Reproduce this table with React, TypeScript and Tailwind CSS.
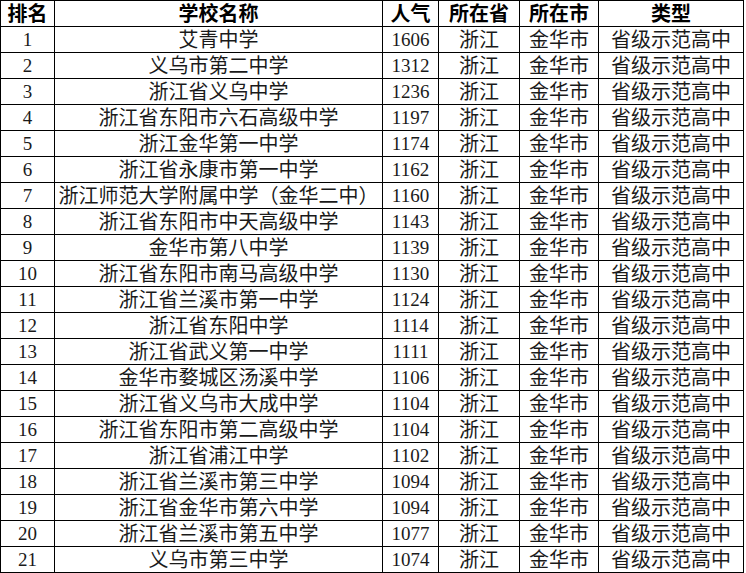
const rows: [number, string, number][] = [
  [1, "艾青中学", 1606],
  [2, "义乌市第二中学", 1312],
  [3, "浙江省义乌中学", 1236],
  [4, "浙江省东阳市六石高级中学", 1197],
  [5, "浙江金华第一中学", 1174],
  [6, "浙江省永康市第一中学", 1162],
  [7, "浙江师范大学附属中学（金华二中）", 1160],
  [8, "浙江省东阳市中天高级中学", 1143],
  [9, "金华市第八中学", 1139],
  [10, "浙江省东阳市南马高级中学", 1130],
  [11, "浙江省兰溪市第一中学", 1124],
  [12, "浙江省东阳中学", 1114],
  [13, "浙江省武义第一中学", 1111],
  [14, "金华市婺城区汤溪中学", 1106],
  [15, "浙江省义乌市大成中学", 1104],
  [16, "浙江省东阳市第二高级中学", 1104],
  [17, "浙江省浦江中学", 1102],
  [18, "浙江省兰溪市第三中学", 1094],
  [19, "浙江省金华市第六中学", 1094],
  [20, "浙江省兰溪市第五中学", 1077],
  [21, "义乌市第三中学", 1074],
];

const headers = ["排名", "学校名称", "人气", "所在省", "所在市", "类型"];

const cell =
  "h-[26px] border-r border-b border-black flex items-center justify-center whitespace-nowrap leading-none";
const zh = `${cell} text-[20px]`;

export default function App() {
  return (
    <div className="bg-white min-h-screen">
      <div
        className="grid grid-cols-[54px_328px_56px_81px_79px_145px] w-[744px] border-l border-t border-black text-[19px] text-[#1a1a1a]"
        style={{ fontFamily: '"Liberation Serif", "Noto Sans CJK SC", serif' }}
      >
        {headers.map((h) => (
          <div key={h} className={`${zh} font-bold text-black`}>
            {h}
          </div>
        ))}
        {rows.map(([rank, name, hot]) => (
          <div key={rank} className="contents">
            <div className={cell}>{rank}</div>
            <div className={zh}>{name}</div>
            <div className={cell}>{hot}</div>
            <div className={zh}>浙江</div>
            <div className={zh}>金华市</div>
            <div className={zh}>省级示范高中</div>
          </div>
        ))}
      </div>
    </div>
  );
}
